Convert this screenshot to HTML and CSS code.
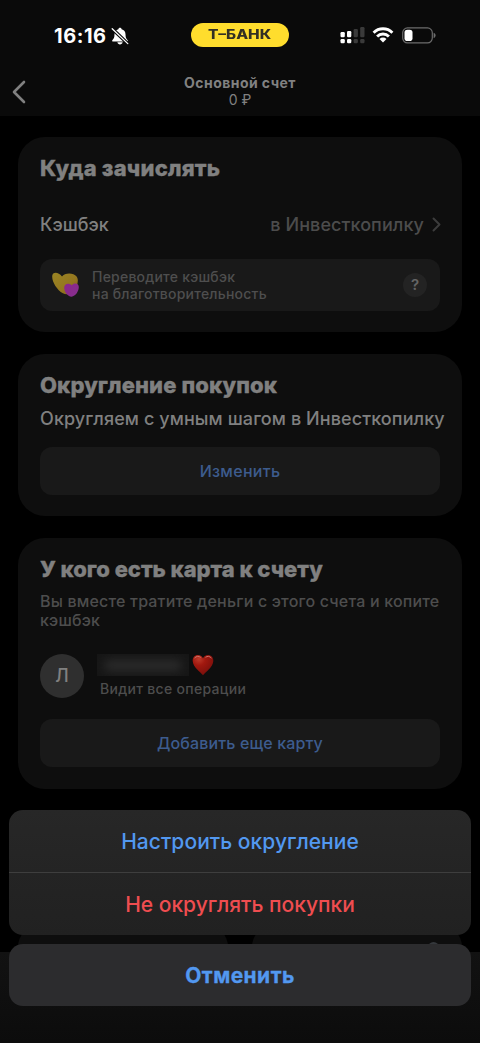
FILE: index.html
```html
<!DOCTYPE html>
<html lang="ru">
<head>
<meta charset="utf-8">
<meta name="viewport" content="width=device-width, initial-scale=1">
<title>Основной счет</title>
<link rel="stylesheet" href="styles.css">
</head>
<body>
<div class="screen">
  <header class="header">
    <div class="status">
      <div class="status-left">
        <span class="time">16:16</span>
        <svg class="bell" width="18" height="18" viewBox="0 0 18 18">
          <path fill="#fff" d="M9 .8c.9 0 1.500.6 1.600 1.400 2.500.7 3.900 2.600 3.900 5 0 3.400.8 4.500 2 5.700.7.7.3 1.600-.6 1.600H2.100c-.9 0-1.300-.9-.6-1.600 1.200-1.200 2-2.300 2-5.700 0-2.400 1.400-4.300 3.900-5C7.500 1.400 8.100.8 9 .8zM6.400 15.300h5.200c-.2 1.300-1.300 2.100-2.600 2.100s-2.400-.8-2.600-2.100z"/>
          <path stroke="#0a0a0a" stroke-width="3.400" d="M1 1.500 17 16.800"/>
          <path stroke="#fff" stroke-width="1.300" stroke-linecap="round" d="M1.200 1.700 16.800 16.600"/>
        </svg>
      </div>
      <div class="brand"><span>Т–БАНК</span></div>
      <div class="status-right">
        <svg width="25" height="17" viewBox="0 0 25 17">
          <g fill="#fff"><rect x="0.500" y="5" width="4.300" height="5.200" rx="1.200"/><rect x="7" y="4" width="4.300" height="6.200" rx="1.200"/><rect x="0.500" y="12" width="4.300" height="4.300" rx="1.200"/><rect x="7" y="12" width="4.300" height="4.300" rx="1.200"/></g>
          <g fill="#3a3a3a"><rect x="13.600" y="2" width="4.300" height="8.200" rx="1.200"/><rect x="20.200" y="0" width="4.300" height="10.200" rx="1.200"/><rect x="13.600" y="12" width="4.300" height="4.300" rx="1.200"/><rect x="20.200" y="12" width="4.300" height="4.300" rx="1.200"/></g>
        </svg>
        <svg width="22" height="16" viewBox="0 0 22 16">
          <g fill="none" stroke="#fff" stroke-width="2.900"><path d="M1.600 5.700a13.300 13.300 0 0 1 18.800 0"/><path d="M5.100 9.500a8.300 8.300 0 0 1 11.800 0"/></g>
          <path fill="#fff" d="M11 15.600 7.500 12a5 5 0 0 1 7 0z"/>
        </svg>
        <svg width="34" height="17" viewBox="0 0 34 17">
          <rect x=".7" y=".9" width="29.600" height="15" rx="4.800" fill="none" stroke="#6c6c6c" stroke-width="1.200"/>
          <rect x="2.500" y="2.800" width="8" height="11.200" rx="2.800" fill="#fff"/>
          <path fill="#6c6c6c" d="M31.600 5.800c1.200.5 2 1.500 2 2.600s-.8 2.100-2 2.600z"/>
        </svg>
      </div>
    </div>
    <div class="nav">
      <svg class="back" width="14" height="24" viewBox="0 0 14 24"><path d="M12 2 2 12l10 10" fill="none" stroke="#808080" stroke-width="2.600" stroke-linecap="round" stroke-linejoin="round"/></svg>
      <div class="nav-text"><div class="nav-title">Основной счет</div><div class="nav-sum">0 ₽</div></div>
    </div>
  </header>

  <main class="content">
    <section class="card card-cashback">
      <h2>Куда зачислять</h2>
      <div class="row">
        <span class="row-name">Кэшбэк</span>
        <span class="row-value">в Инвесткопилку</span>
        <svg width="9" height="15" viewBox="0 0 9 15"><path d="m1.500 1.500 6 6-6 6" fill="none" stroke="#3c3c3c" stroke-width="2" stroke-linecap="round" stroke-linejoin="round"/></svg>
      </div>
      <div class="charity">
        <svg width="28" height="26" viewBox="0 0 28 26">
          <defs>
            <linearGradient id="gold" x1="0" y1="0" x2="1" y2="1"><stop offset="0" stop-color="#9a8524"/><stop offset=".6" stop-color="#94761f"/><stop offset="1" stop-color="#805a22"/></linearGradient>
            <linearGradient id="pink" x1="0" y1="0" x2="1" y2="1"><stop offset="0" stop-color="#8b258d"/><stop offset="1" stop-color="#87308d"/></linearGradient>
          </defs>
          <path fill="url(#gold)" d="M.4 3C1.500-.2 6.500 0 10 4.600c2.500-4 11.300-4.200 14.600-.2 2.700 3.800.6 10.600-3 14.600-3 3.200-7 4-10.700 2.300C4.500 17.800-.9 8.500.4 3z"/>
          <path fill="url(#pink)" d="M12.200 15.500c.1-3.600 4.300-5.200 7.600-2.200 2.400-2.900 6.700-2.100 7 1.500.2 4.200-3.200 9.500-7.300 9.900-3.800-.1-7.400-5-7.300-9.200z"/>
        </svg>
        <p>Переводите кэшбэк<br><span>на благотворительность</span></p>
        <span class="help">?</span>
      </div>
    </section>

    <section class="card card-round">
      <h2>Округление покупок</h2>
      <p class="lead">Округляем с умным шагом в Инвесткопилку</p>
      <div class="button"><span>Изменить</span></div>
    </section>

    <section class="card card-people">
      <h2>У кого есть карта к счету</h2>
      <p class="note">Вы вместе тратите деньги с этого счета и копите<br>кэшбэк</p>
      <div class="person">
        <div class="avatar">Л</div>
        <div class="person-info">
          <div class="person-name">
            <span class="hidden-name"><i></i></span>
            <svg width="22" height="22" viewBox="0 0 22 22">
              <defs><radialGradient id="heart" cx=".3" cy=".2" r=".9"><stop offset="0" stop-color="#bd3b2b"/><stop offset=".35" stop-color="#a1180f"/><stop offset="1" stop-color="#730e0b"/></radialGradient></defs>
              <path fill="url(#heart)" d="M11 21.200C8.500 18 1 13.500.7 7 .5 3.300 3 1 5.900 1 8.300 1 10.300 2.400 11 4.600 11.700 2.400 13.700 1 16.100 1c2.900 0 5.400 2.300 5.200 6-.3 6.500-7.800 11-10.300 14.200z"/>
              <path d="M2.800 3.800c1.500-1.700 4-1.900 5.600-.6M13.800 3.100c1.600-1.200 3.900-1 5.400.7" stroke="#cf7268" stroke-width="1" fill="none" stroke-linecap="round"/>
            </svg>
          </div>
          <div class="person-note">Видит все операции</div>
        </div>
      </div>
      <div class="button"><span class="add">Добавить еще карту</span></div>
    </section>

    <div class="tiles"><div class="tile"></div><div class="tile"><i></i></div></div>
  </main>
  <div class="tabbar"></div>

  <div class="sheet">
    <div class="actions">
      <div class="action configure">Настроить округление</div>
      <div class="action danger">Не округлять покупки</div>
    </div>
    <div class="action cancel">Отменить</div>
  </div>
</div>
</body>
</html>
```
FILE: styles.css
```css
* { box-sizing: border-box; }
body { margin: 0; background: #000; font-family: Inter, "Noto Sans", sans-serif; }
h2, p { margin: 0; }
svg { display: block; flex: none; }
.screen { position: relative; width: 480px; height: 1043px; overflow: hidden; background: #000; }

.header { height: 116px; background: #0a0a0a; }
.status { display: grid; grid-template-columns: 191px 98px 1fr; height: 70px; align-items: center; }
.status-left { display: flex; align-items: center; gap: 4px; padding: 1px 0 0 54px; }
.time { color: #fff; font-size: 20px; font-weight: 700; line-height: 24px; letter-spacing: .55px; }
.brand { height: 24px; border-radius: 12px; background: #ffdd2d; color: #333024; font: 800 12.5px/24px Inter, sans-serif; text-align: center; }
.brand span { display: inline-block; transform: scaleX(1.24); }
.status-right { display: flex; align-items: center; padding-left: 51px; }
.status-right svg:nth-child(2) { margin-left: 7px; }
.status-right svg:nth-child(3) { margin-left: 8px; }
.nav { display: grid; grid-template-columns: 26px 1fr 26px; align-items: center; height: 44px; }
.back { margin-left: 12px; }
.nav-text { padding-bottom: 2px; color: #818181; text-align: center; font-size: 14px; }
.nav-title { font-weight: 700; line-height: 18px; letter-spacing: .45px; }
.nav-sum { line-height: 16px; }

.content { padding: 21px 18px 0; }
.card { padding: 18px 22px 22px; margin-bottom: 22px; border-radius: 27px; background: #0e0e0e; }
.card-cashback { height: 195px; }
.card-round { height: 162px; }
.card-people { height: 251px; margin-bottom: 136px; }
h2 { color: #808080; font-size: 22px; font-weight: 800; line-height: 26px; white-space: nowrap; -webkit-text-stroke: .35px #808080; }
.card-cashback h2 { letter-spacing: .2px; }
.card-round h2 { letter-spacing: .1px; }
.card-people h2 { letter-spacing: -.04px; }
.row { display: flex; align-items: center; margin-top: 30px; height: 26px; font-size: 18px; font-weight: 500; color: #808080; }
.row-value { margin-left: auto; margin-right: 8px; color: #4c4c4c; letter-spacing: .08px; }
.row svg { margin-right: -1px; }
.charity { display: flex; align-items: center; height: 52px; margin-top: 22px; padding: 0 13px 0 12px; border-radius: 12px; background: #191919; }
.charity p { margin-left: 12px; color: #4e4e4e; font-size: 14px; font-weight: 500; line-height: 17px; white-space: nowrap; letter-spacing: .22px; }
.help { width: 24px; height: 24px; margin-left: auto; border-radius: 50%; background: #232323; color: #656565; font-size: 15px; font-weight: 600; line-height: 24px; text-align: center; }
.lead { margin-top: 10px; color: #808080; font-size: 18px; font-weight: 500; line-height: 22px; white-space: nowrap; letter-spacing: .09px; }
.button { display: flex; align-items: center; justify-content: center; height: 48px; margin-top: 17px; border-radius: 12px; background: #191919; color: #3d5c8e; font-size: 16px; font-weight: 500; letter-spacing: .3px; }
.button .add { letter-spacing: .15px; }
.note { margin-top: 10px; color: #4d4d4d; font-size: 16px; font-weight: 500; line-height: 19px; letter-spacing: .18px; white-space: nowrap; }
.person { display: flex; align-items: center; height: 44px; margin-top: 24px; }
.avatar { width: 44px; height: 44px; border-radius: 50%; background: #2f2f2f; color: #808080; font-size: 18px; font-weight: 500; line-height: 44px; text-align: center; }
.person-info { padding-left: 13px; }
.person-name { display: flex; gap: 3px; height: 22px; }
.hidden-name { width: 92px; height: 22px; padding: 6px 7px; overflow: hidden; background: #161616; }
.hidden-name i { display: block; height: 11px; border-radius: 5px; background: #2b2b2b; filter: blur(5px); }
.person-note { padding: 3px 0 0 3px; color: #4d4d4d; font-size: 14px; font-weight: 500; line-height: 20px; letter-spacing: .3px; }
.card-people .button { margin-top: 21px; }
.tiles { display: grid; grid-template-columns: 210px 210px; gap: 24px; }
.tile { height: 80px; padding: 17px 0 0 176px; border-radius: 22px; background: #0e0e0e; }
.tile i { display: block; width: 11px; height: 11px; border-radius: 50%; background: #35383c; }
.tabbar { position: absolute; inset: 952px 0 0; background: linear-gradient(#121212, #0c0c0c); }

.sheet { position: absolute; left: 9px; right: 9px; top: 810px; text-align: center; }
.actions { border-radius: 14px; overflow: hidden; background: linear-gradient(#272727, #212121); }
.action { height: 62px; line-height: 63px; font-size: 21px; font-weight: 500; color: #5298f0; }
.configure { letter-spacing: .05px; }
.danger { height: 63px; border-top: 1px solid #3e3e3e; color: #ef4d50; }
.cancel { margin-top: 9px; border-radius: 14px; background: #2c2c2e; font-weight: 700; letter-spacing: .45px; -webkit-text-stroke: .3px #5298f0; }
```
